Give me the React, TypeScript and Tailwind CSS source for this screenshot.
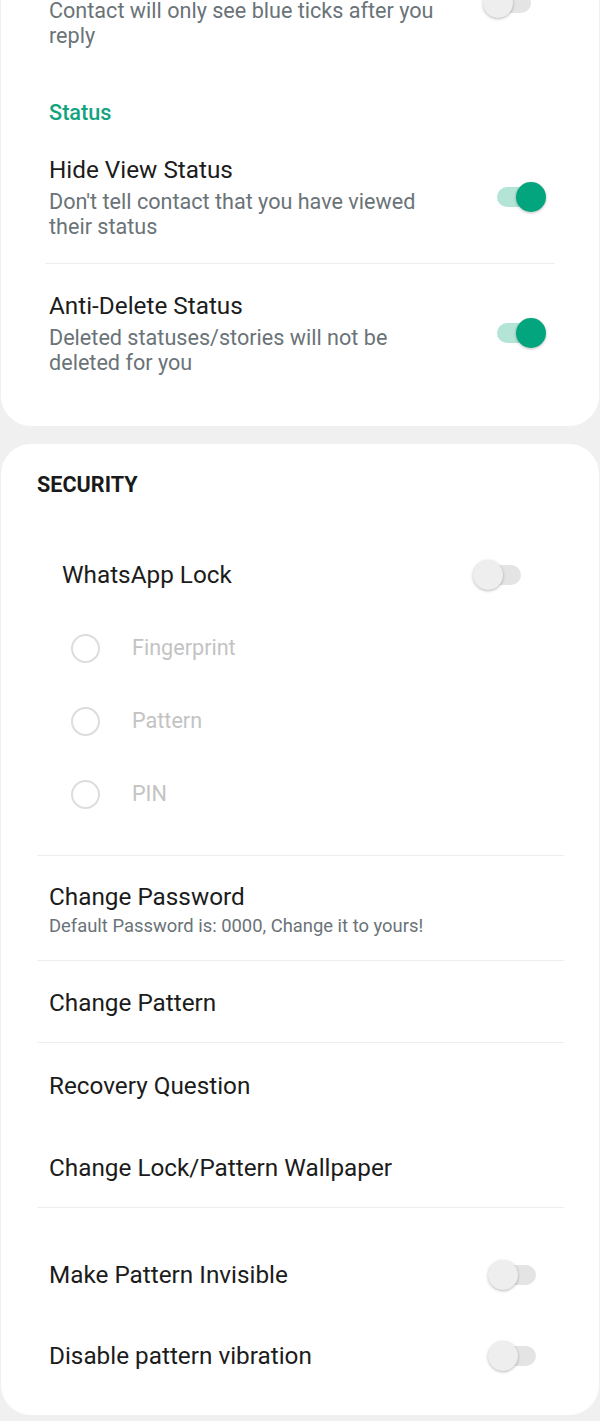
import React from "react";

function Toggle({ on }: { on: boolean }) {
  return (
    <div className="relative h-[30px] w-[54px] shrink-0">
      <div
        className={
          "absolute left-[5px] top-[5px] h-[20px] w-[43px] rounded-full " +
          (on ? "bg-[#b3e4d6]" : "bg-[#e4e4e4]")
        }
      />
      <div
        className={
          "absolute top-0 h-[30px] w-[30px] rounded-full shadow-[0_1px_3px_rgba(0,0,0,0.28)] " +
          (on ? "left-[24px] bg-[#03a57e]" : "left-0 bg-[#eeeeee]")
        }
      />
    </div>
  );
}

function Radio({ label }: { label: string }) {
  return (
    <div className="flex h-[73px] items-center pl-[70px]">
      <div className="h-[29px] w-[29px] rounded-full border-[2.5px] border-[#dddddd]" />
      <span className="ml-[32px] text-[21.6px] text-[#c3c3c3]">{label}</span>
    </div>
  );
}

function Divider({ cls }: { cls: string }) {
  return <div className={"h-px bg-[#eeeeee] " + cls} />;
}

const T = "text-[24.3px] leading-[30px] text-[#1c1c1c]";
const S = "text-[21.6px] leading-[25px] text-[#6a7378]";

export default function App() {
  return (
    <div
      className="h-[1421px] w-[600px] overflow-hidden bg-[#f0f0f0] px-px"
      style={{ fontFamily: "Roboto, 'Noto Sans', sans-serif" }}
    >
      {/* Card 1 */}
      <div className="rounded-b-[30px] bg-white pb-[26px]">
        <div className="-mt-[2px] flex justify-between pl-[48px] pr-[62px]">
          <div className={"w-[400px] " + S}>
            Contact will only see blue ticks after you reply
          </div>
          <div className="-mt-[10px]">
            <Toggle on={false} />
          </div>
        </div>
        <div className="mt-[51px] pl-[48px] text-[21.7px] font-medium leading-[28px] text-[#14a37f]">
          Status
        </div>
        <div className="flex items-center justify-between pb-[24px] pl-[48px] pr-[53px] pt-[28px]">
          <div className="w-[400px]">
            <div className={T}>Hide View Status</div>
            <div className={"mt-[4px] " + S}>
              Don't tell contact that you have viewed their status
            </div>
          </div>
          <Toggle on={true} />
        </div>
        <Divider cls="mx-[44px]" />
        <div className="flex items-center justify-between pb-[25px] pl-[48px] pr-[53px] pt-[27px]">
          <div className="w-[400px]">
            <div className={T}>Anti-Delete Status</div>
            <div className={"mt-[4px] " + S}>
              Deleted statuses/stories will not be deleted for you
            </div>
          </div>
          <Toggle on={true} />
        </div>
      </div>

      {/* Card 2 */}
      <div className="mt-[18px] rounded-[30px] bg-white pb-[44px] pt-[27px]">
        <div className="pl-[36px] text-[21.6px] font-bold leading-[28px] text-[#1a1a1a]">SECURITY</div>
        <div className="mt-[61px] flex items-center justify-between pl-[61px] pr-[72px]">
          <div className={T}>WhatsApp Lock</div>
          <Toggle on={false} />
        </div>
        <div className="mt-[22px]">
          <Radio label="Fingerprint" />
          <Radio label="Pattern" />
          <Radio label="PIN" />
        </div>
        <Divider cls="ml-[36px] mr-[35px] mt-[24px]" />
        <div className="pb-[23px] pl-[48px] pt-[26px]">
          <div className={T}>Change Password</div>
          <div className="mt-[3px] text-[18.4px] leading-[22px] text-[#6a7378]">
            Default Password is: 0000, Change it to yours!
          </div>
        </div>
        <Divider cls="ml-[36px] mr-[35px]" />
        <div className={"pb-[24px] pl-[48px] pt-[27px] " + T}>Change Pattern</div>
        <Divider cls="ml-[36px] mr-[35px]" />
        <div className={"pb-[26px] pl-[48px] pt-[28px] " + T}>Recovery Question</div>
        <div className={"pb-[24px] pl-[48px] pt-[26px] " + T}>Change Lock/Pattern Wallpaper</div>
        <Divider cls="ml-[36px] mr-[35px]" />
        <div className="mt-[52px] flex items-center justify-between pl-[48px] pr-[57px]">
          <div className={T}>Make Pattern Invisible</div>
          <Toggle on={false} />
        </div>
        <div className="mt-[51px] flex items-center justify-between pl-[48px] pr-[57px]">
          <div className={T}>Disable pattern vibration</div>
          <Toggle on={false} />
        </div>
      </div>
    </div>
  );
}
